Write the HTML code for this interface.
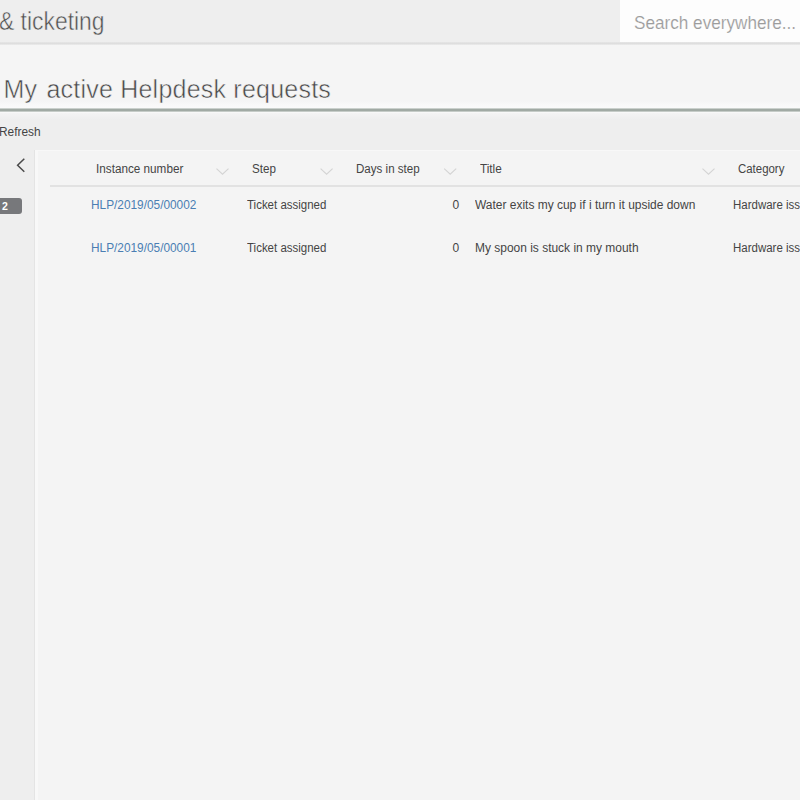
<!DOCTYPE html>
<html lang="en">
<head>
<meta charset="utf-8">
<title>Helpdesk &amp; ticketing</title>
<style>
html,body{margin:0;padding:0;}
body{width:800px;height:800px;overflow:hidden;position:relative;background:#eeeeee;font-family:"Liberation Sans",sans-serif;color:#444;}
.abs{position:absolute;white-space:nowrap;}
.t{position:absolute;white-space:nowrap;display:inline-block;transform-origin:0 50%;line-height:1;}
#topbar{left:0;top:0;width:800px;height:42px;background:#eeeeee;}
#tline{left:0;top:42px;width:800px;height:3px;background:linear-gradient(#e6e6e6,#dedede 50%,#ececec);}
#search{left:620px;top:0;width:180px;height:42px;background:#fdfdfd;}
#head{left:0;top:45px;width:800px;height:62px;background:linear-gradient(#f5f5f5 0,#f5f5f5 56px,#f9f9f9 60px,#fafafa 62px);}
#gline{left:0;top:107px;width:800px;height:6px;background:linear-gradient(#fafafa 0,#fafafa 1px,#cbd1cd 1px,#cbd1cd 2px,#a1aaa4 2px,#a1aaa4 4px,#c6ccc8 4px,#c6ccc8 5px,#f8f8f8 5px,#f8f8f8 6px);}
#toolbar{left:0;top:113px;width:800px;height:37px;background:linear-gradient(#f4f4f4 0,#eeeeee 7px);}
#side{left:0;top:150px;width:34px;height:650px;background:#eeeeee;border-right:1px solid #e4e4e4;}
#panel{left:35px;top:150px;width:762px;height:649px;background:#f4f4f4;border-left:3px solid #f8f8f8;border-top:1px solid #f8f8f8;}
#hline{left:50px;top:185px;width:750px;height:2px;background:#e2e2e2;}
#badge{left:0;top:198px;width:22px;height:16px;background:#77787b;border-radius:0 3px 3px 0;}
.hd{font-size:12px;color:#444;}
.cell{font-size:12px;color:#444;}
.lnk{color:#4a7eb3;}
</style>
</head>
<body>
<div class="abs" id="topbar"></div>
<div class="abs" id="search"></div>
<div class="abs" id="tline"></div>
<div class="abs" id="head"></div>
<div class="abs" id="gline"></div>
<div class="abs" id="toolbar"></div>
<div class="abs" id="side"></div>
<div class="abs" id="panel"></div>
<div class="abs" id="hline"></div>
<div class="abs" id="badge"></div>

<span class="t" id="brand" style="transform:scaleX(0.88);left:-1.300px;top:7.500px;font-size:26px;color:#505050;-webkit-text-stroke:0.500px #eeeeee;">&amp; ticketing</span>
<span class="t" id="srch" style="transform:scaleX(0.927);left:634.300px;top:13.500px;font-size:18.500px;color:#9c9c9c;-webkit-text-stroke:0.150px #fdfdfd;">Search everywhere...</span>
<span class="t" id="title" style="left:3.500px;top:77px;font-size:25px;letter-spacing:0.220px;color:#484848;-webkit-text-stroke:0.500px #f5f5f5;"><span style="margin-right:2px">My</span> active Helpdesk requests</span>
<span class="t" id="refresh" style="transform:scaleX(0.990);left:-1px;top:125.500px;font-size:12px;">Refresh</span>
<span class="t" id="bnum" style="left:2px;top:200.500px;font-size:10.500px;font-weight:bold;color:#fff;">2</span>

<svg class="abs" style="left:0;top:150px" width="800" height="60" viewBox="0 0 800 60" fill="none">
  <path d="M24.3 8.7 L17.6 15.2 L24.3 21.7" stroke="#4a4a4a" stroke-width="1.5"/>
  <g stroke="#d4d4d4" stroke-width="1.15">
    <path d="M216.500 18.700 L222.500 24.200 L228.500 18.700"/>
    <path d="M320.600 18.700 L326.600 24.200 L332.600 18.700"/>
    <path d="M444.200 18.700 L450.200 24.200 L456.200 18.700"/>
    <path d="M702.500 18.700 L708.500 24.200 L714.500 18.700"/>
  </g>
</svg>

<span class="t hd" id="h1" style="transform:scaleX(0.977);left:96px;top:163px;">Instance number</span>
<span class="t hd" id="h2" style="transform:scaleX(0.969);left:252px;top:163px;">Step</span>
<span class="t hd" id="h3" style="transform:scaleX(0.965);left:356px;top:163px;">Days in step</span>
<span class="t hd" id="h4" style="transform:scaleX(0.979);left:480px;top:163px;">Title</span>
<span class="t hd" id="h5" style="transform:scaleX(0.952);left:738px;top:163px;">Category</span>

<span class="t cell lnk" id="r1c1" style="transform:scaleX(0.987);left:91px;top:199px;">HLP/2019/05/00002</span>
<span class="t cell" id="r1c2" style="transform:scaleX(0.957);left:247px;top:199px;">Ticket assigned</span>
<span class="t cell" id="r1c3" style="left:452.500px;top:199px;">0</span>
<span class="t cell" id="r1c4" style="transform:scaleX(0.997);left:475px;top:199px;">Water exits my cup if i turn it upside down</span>
<span class="t cell" id="r1c5" style="transform:scaleX(0.957);left:733px;top:199px;">Hardware issue</span>

<span class="t cell lnk" id="r2c1" style="transform:scaleX(0.987);left:91px;top:242px;">HLP/2019/05/00001</span>
<span class="t cell" id="r2c2" style="transform:scaleX(0.957);left:247px;top:242px;">Ticket assigned</span>
<span class="t cell" id="r2c3" style="left:452.500px;top:242px;">0</span>
<span class="t cell" id="r2c4" style="transform:scaleX(0.997);left:475px;top:242px;">My spoon is stuck in my mouth</span>
<span class="t cell" id="r2c5" style="transform:scaleX(0.957);left:733px;top:242px;">Hardware issue</span>
</body>
</html>
